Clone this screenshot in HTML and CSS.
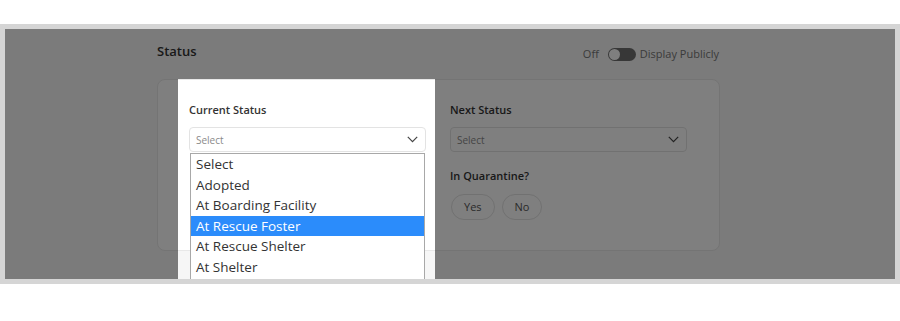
FILE: index.html
```html
<!DOCTYPE html>
<html lang="en">
<head>
<meta charset="utf-8">
<title>Status</title>
<link rel="stylesheet" href="styles.css">
</head>
<body>
<div class="frame">
  <div class="screen">
    <div class="page">
      <div class="header">
        <div class="title">Status</div>
        <div class="visibility">
          <span class="off">Off</span>
          <span class="switch"><span class="knob"></span></span>
          <span>Display Publicly</span>
        </div>
      </div>
      <div class="card">
        <div class="col">
          <div class="field-label">Current Status</div>
          <div class="select">
            <span>Select</span>
            <svg class="chev" width="11" height="7" viewBox="0 0 11 7"><polyline points="0.8,0.8 5.5,5.6 10.2,0.8" fill="none" stroke="#444" stroke-width="1.2"/></svg>
          </div>
          <div class="listbox">
            <div class="option">Select</div>
            <div class="option">Adopted</div>
            <div class="option">At Boarding Facility</div>
            <div class="option active">At Rescue Foster</div>
            <div class="option">At Rescue Shelter</div>
            <div class="option">At Shelter</div>
          </div>
        </div>
        <div class="col">
          <div class="field-label">Next Status</div>
          <div class="select">
            <span>Select</span>
            <svg class="chev" width="11" height="7" viewBox="0 0 11 7"><polyline points="0.8,0.8 5.5,5.6 10.2,0.8" fill="none" stroke="#444" stroke-width="1.2"/></svg>
          </div>
          <div class="field-label spaced">In Quarantine?</div>
          <div class="pills">
            <span class="pill">Yes</span>
            <span class="pill">No</span>
          </div>
        </div>
      </div>
    </div>
    <div class="spotlight"></div>
  </div>
</div>
</body>
</html>
```
FILE: styles.css
```css
html, body {
  margin: 0;
  background: #fff;
  font-family: "Open Sans", "Noto Sans", sans-serif;
}

.frame {
  margin-top: 24px;
  height: 260px;
  box-sizing: border-box;
  padding: 5px;
  background: #d5d5d5;
}

.screen {
  position: relative;
  height: 250px;
  overflow: hidden;
  background: #f6f6f6;
}

.page {
  width: 563px;
  margin-left: 152px;
}

.header {
  height: 50px;
  box-sizing: border-box;
  padding-top: 14px;
  display: flex;
  justify-content: space-between;
  align-items: flex-start;
}

.title {
  font-size: 13px;
  line-height: 16px;
  font-weight: 600;
  color: #333;
}

.visibility {
  display: flex;
  align-items: center;
  gap: 4px;
  margin-top: 4px;
  margin-right: 1px;
  font-size: 11px;
  line-height: 14px;
  color: #777;
}

.off {
  margin-right: 5px;
}

.switch {
  width: 28px;
  height: 13px;
  box-sizing: border-box;
  padding: 1px;
  border-radius: 7px;
  background: #6e6e6e;
  display: flex;
  align-items: center;
}

.knob {
  width: 11px;
  height: 11px;
  border-radius: 50%;
  background: #fff;
}

.card {
  background: #fff;
  border: 1px solid #e8e8e8;
  border-radius: 8px;
  padding: 22px 32px 30px 31px;
  display: grid;
  grid-template-columns: 237px 237px;
  column-gap: 24px;
}

.col {
  position: relative;
}

.field-label {
  font-size: 11px;
  line-height: 16px;
  font-weight: 600;
  color: #333;
}

.field-label.spaced {
  margin-top: 16px;
}

.select {
  margin-top: 9px;
  height: 25px;
  box-sizing: border-box;
  border: 1px solid #e3e3e3;
  border-radius: 4px;
  background: #fff;
  display: flex;
  align-items: center;
  justify-content: space-between;
  padding: 0 7px 0 6px;
  font-size: 10px;
  color: #8a8a8a;
}

.chev {
  display: block;
}

.listbox {
  position: absolute;
  top: 51px;
  left: 1px;
  right: 1px;
  z-index: 3;
  padding-bottom: 6px;
  background: #fff;
  border: 1px solid #a8a8a8;
  font-size: 13.5px;
  line-height: 20.5px;
  color: #333;
}

.option {
  padding-left: 5px;
  white-space: nowrap;
}

.option.active {
  background: #2b8cfb;
  color: #fff;
}

.pills {
  display: flex;
  gap: 7px;
  margin-top: 10px;
  margin-left: 1px;
}

.pill {
  height: 26px;
  box-sizing: border-box;
  border: 1px solid #e2e2e2;
  border-radius: 13px;
  padding: 0 12px;
  font-size: 11px;
  line-height: 24px;
  color: #555;
  background: #fff;
}

.spotlight {
  position: absolute;
  left: 173px;
  top: 50px;
  width: 257px;
  height: 260px;
  z-index: 2;
  pointer-events: none;
  box-shadow: 0 0 0 1200px rgba(0, 0, 0, 0.5);
}
```
